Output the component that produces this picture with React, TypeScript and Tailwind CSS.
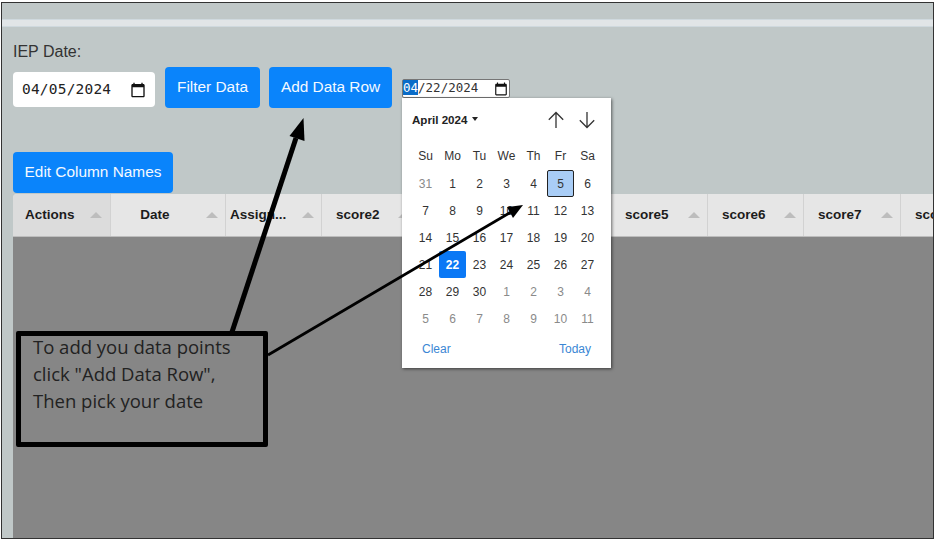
const SANS = "font-['Liberation_Sans',Arial,sans-serif]"

const WEEKDAYS = ["Su", "Mo", "Tu", "We", "Th", "Fr", "Sa"]

// month view: [label, muted]
const DAYS: Array<[number, boolean]> = [
  [31, true],
  ...Array.from({ length: 30 }, (_, i): [number, boolean] => [i + 1, false]),
  ...Array.from({ length: 11 }, (_, i): [number, boolean] => [i + 1, true]),
]

const COLUMNS = [
  { label: "Date", width: "w-[115px]", text: "justify-center pr-[26px]" },
  { label: "Assign...", width: "w-[96px]", text: "pl-[4px]" },
  { label: "score2", width: "w-[96px]", text: "pl-[14px]" },
  // score3 and score4 sit under the date popup
  { label: "", width: "w-[193px]", text: "" },
  { label: "score5", width: "w-[97px]", text: "pl-[14px]" },
  { label: "score6", width: "w-[96px]", text: "pl-[14px]" },
  { label: "score7", width: "w-[97px]", text: "pl-[14px]" },
]

function CalendarIcon({ size }: { size: number }) {
  return (
    <svg width={size} height={size} viewBox="0 0 24 24" className="shrink-0" aria-hidden>
      <path
        d="M20 3h-1V1h-2v2H7V1H5v2H4c-1.100 0-2 .9-2 2v16c0 1.100.9 2 2 2h16c1.100 0 2-.9 2-2V5c0-1.100-.9-2-2-2zm0 18H4V8h16v13z"
        fill="#111"
      />
    </svg>
  )
}

function SortCaret({ className = "" }: { className?: string }) {
  return (
    <span
      className={`absolute top-[18px] h-0 w-0 border-x-[6px] border-b-[6px] border-x-transparent border-b-[#bdbdbd] ${className}`}
    />
  )
}

function Button({ label, className = "" }: { label: string; className?: string }) {
  return (
    <button
      type="button"
      className={`h-[41px] rounded-[4px] bg-[#0a84fb] pb-[2px] text-[15.400px] text-[#f4f9ff] ${className}`}
    >
      {label}
    </button>
  )
}

function DatePopup() {
  return (
    <div className={`absolute left-[-1px] top-[18px] z-10 h-[270px] w-[209px] bg-white shadow-[1px_1px_3px_rgba(0,0,0,0.55)] ${SANS}`}>
      <div className="flex h-[43px] items-center justify-between pl-[10px] pr-[15px]">
        <span className="flex items-center gap-[5px] text-[11.600px] font-bold text-[#222]">
          April 2024
          <span className="h-0 w-0 border-x-[3.500px] border-t-[4px] border-x-transparent border-t-[#222]" />
        </span>
        <div className="flex gap-[13px]">
          <svg width="18" height="18" viewBox="0 0 18 18" fill="none" stroke="#333" strokeWidth="1.300" aria-hidden>
            <path d="M9 17V1.500M1.800 8.700 9 1.500l7.200 7.200" />
          </svg>
          <svg width="18" height="18" viewBox="0 0 18 18" fill="none" stroke="#333" strokeWidth="1.300" aria-hidden>
            <path d="M9 1v15.500M1.800 9.300 9 16.500l7.200-7.200" />
          </svg>
        </div>
      </div>
      <div className="grid grid-cols-[repeat(7,27px)] justify-center text-[12px] text-[#333]">
        {WEEKDAYS.map((d) => (
          <span key={d} className="flex h-[29px] items-center justify-center">{d}</span>
        ))}
        {DAYS.map(([n, muted], i) => {
          const isToday = !muted && n === 5
          const isPicked = !muted && n === 22
          return (
            <span
              key={i}
              className={`flex h-[27px] items-center justify-center rounded-[2px] ${
                isToday
                  ? "border border-[#222] bg-[#a9cdf6]"
                  : isPicked
                    ? "bg-[#0a78f5] font-bold text-white"
                    : muted
                      ? "text-[#8a8a8a]"
                      : ""
              }`}
            >
              {n}
            </span>
          )
        })}
      </div>
      <div className="flex justify-between pl-[20px] pr-[20px] pt-[8px] text-[12px] text-[#3a86d4]">
        <span>Clear</span>
        <span>Today</span>
      </div>
    </div>
  )
}

function Arrows() {
  return (
    <svg
      width="937"
      height="540"
      viewBox="0 0 937 540"
      className="pointer-events-none absolute left-0 top-0 z-20"
      aria-hidden
    >
      <path d="M232 332 296 138" stroke="#000" strokeWidth="5" fill="none" />
      <path d="M303.500 118 289.500 136 304.500 141z" fill="#000" />
      <path d="M268 355 511 212" stroke="#000" strokeWidth="2.800" fill="none" />
      <path d="M523 205 507 207 513 218z" fill="#000" />
    </svg>
  )
}

function Callout() {
  return (
    <div className="absolute left-[16px] top-[331px] z-20 h-[116px] w-[252px] rounded-[2px] border-[5px] border-black pl-[12px] font-['Open_Sans',sans-serif] text-[18.500px] leading-[27px] text-[#222]">
      <div className="-mt-[3px]">
        To add you data points
        <br />
        click "Add Data Row",
        <br />
        Then pick your date
      </div>
    </div>
  )
}

export default function App() {
  return (
    <div className="relative h-[540px] w-[937px] overflow-hidden bg-white pl-[1px] pt-[2px]">
      <div className={`flex h-[537px] w-[933px] flex-col overflow-hidden border border-[#333] bg-[#c0c8c8] ${SANS}`}>
        <div className="mt-[16px] h-[8px] shrink-0 border-y border-[#cfd9de] bg-[#e1e5e7]" />

        <div className="flex shrink-0 flex-col pl-[11px]">
          <label className="mt-[15px] h-[25px] text-[16px] leading-[20px] text-[#333]">IEP Date:</label>

          <div className="flex items-start">
            <div className="mt-[5px] flex h-[35px] w-[142px] items-center justify-between rounded-[4px] bg-white pl-[9px] pr-[9px] font-['DejaVu_Sans_Mono',monospace] text-[14.500px] tracking-[0.2px] text-[#222]">
              04/05/2024
              <CalendarIcon size={16} />
            </div>
            <Button label="Filter Data" className="ml-[10px] w-[95px]" />
            <Button label="Add Data Row" className="ml-[9px] w-[123px]" />
            <div className="relative ml-[10px] mt-[12px] flex h-[19px] w-[108px] items-center justify-between rounded-[2px] border border-[#767676] bg-white pr-[1px] font-['DejaVu_Sans_Mono',monospace] text-[12.500px] text-[#333]">
              <span>
                <span className="bg-[#0a6cc8] text-white">04</span>/22/2024
              </span>
              <CalendarIcon size={14} />
              <DatePopup />
            </div>
          </div>

          <Button label="Edit Column Names" className="mt-[44px] w-[160px]" />
        </div>

        <div className="ml-[11px] mt-px flex h-[43px] shrink-0 overflow-hidden rounded-tl-[4px] border-b border-[#bdbdbd] bg-[#e6e6e6] text-[13.500px] font-bold text-[#1c1c1c]">
          <div className="relative flex w-[97px] shrink-0 items-center bg-[#dcdcdc] pl-[12px]">
            Actions
            <SortCaret className="right-[8px]" />
          </div>
          {COLUMNS.map((c) => (
            <div key={c.width + c.label} className={`relative flex shrink-0 items-center border-l border-[#d2d2d2] ${c.width} ${c.text}`}>
              {c.label}
              {c.label && <SortCaret className="right-[7px]" />}
            </div>
          ))}
          <div className="flex shrink-0 items-center border-l border-[#d2d2d2] pl-[14px]">score8</div>
        </div>

        <div className="ml-[11px] flex-1 bg-[#868686]" />
      </div>

      <Callout />
      <Arrows />
    </div>
  )
}
